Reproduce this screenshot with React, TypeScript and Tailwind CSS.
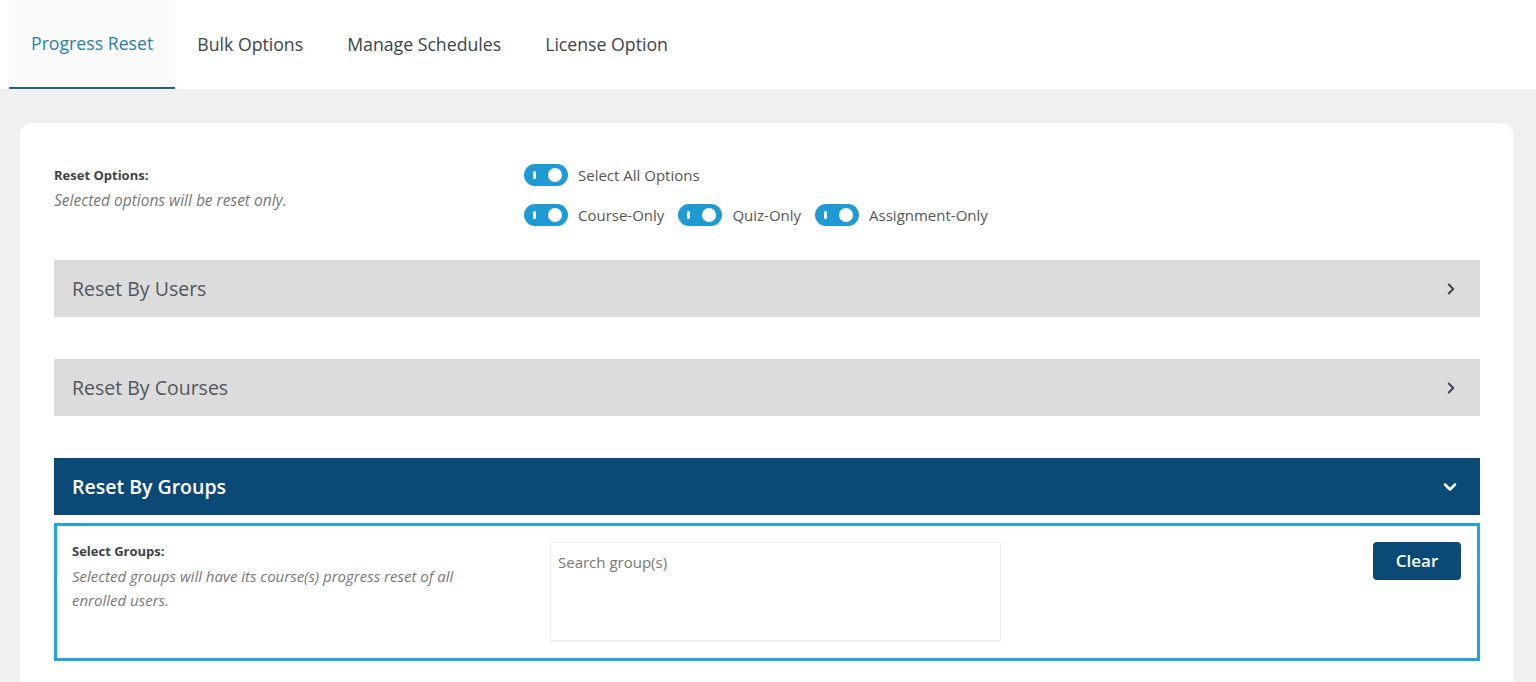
import { ChevronRight, ChevronDown } from "lucide-react";

const tabs = ["Progress Reset", "Bulk Options", "Manage Schedules", "License Option"];

function Toggle() {
  return (
    <span className="relative inline-flex h-[22px] w-[44px] items-center rounded-full bg-[#1f9ad3]">
      <span className="absolute left-[9px] top-[7px] h-[8px] w-[3px] rounded-sm bg-white" />
      <span className="absolute right-[6px] top-[4px] h-[14px] w-[14px] rounded-full bg-white" />
    </span>
  );
}

function Option({ label }: { label: string }) {
  return (
    <label className="flex items-center gap-[10px] text-[15px] text-[#555]">
      <Toggle />
      <span>{label}</span>
    </label>
  );
}

function Panel({ title, open }: { title: string; open?: boolean }) {
  return (
    <div
      className={
        open
          ? "flex h-[57px] items-center justify-between bg-[#0b4a77] pl-[18px] pr-[20px] text-white"
          : "flex h-[57px] items-center justify-between bg-[#dcdcdc] pl-[18px] pr-[20px] text-[#50575e]"
      }
    >
      <h3 className={open ? "text-[19.5px] font-semibold" : "text-[19.5px]"}>{title}</h3>
      {open ? (
        <ChevronDown size={20} strokeWidth={3} />
      ) : (
        <ChevronRight size={18} strokeWidth={2.5} className="text-[#3c434a]" />
      )}
    </div>
  );
}

export default function App() {
  return (
    <div className="min-h-screen bg-[#f0f0f1] font-['Open_Sans',sans-serif]">
      {/* tabs */}
      <nav className="flex h-[89px] items-stretch bg-white pl-[9px]">
        {tabs.map((t, i) => (
          <div
            key={t}
            className={
              i === 0
                ? "flex items-center border-b-2 border-[#1c6479] bg-[#fafafa] px-[22px] text-[17.7px] text-[#2980ad]"
                : "flex items-center px-[22px] text-[17.7px] text-[#3c434a]"
            }
          >
            {t}
          </div>
        ))}
      </nav>

      <div className="pl-[20px] pr-[23px] pt-[34px]">
        <div className="rounded-t-[12px] bg-white pl-[34px] pr-[33px] pt-[41px] pb-[24px]">
          {/* reset options */}
          <div className="flex">
            <div className="w-[470px] pt-[2px]">
              <p className="text-[13px] font-bold text-[#3c434a]">Reset Options:</p>
              <p className="mt-[3px] text-[15.5px] italic text-[#777]">
                Selected options will be reset only.
              </p>
            </div>
            <div className="flex flex-col gap-[17px]">
              <Option label="Select All Options" />
              <div className="flex gap-[14px]">
                <Option label="Course-Only" />
                <Option label="Quiz-Only" />
                <Option label="Assignment-Only" />
              </div>
            </div>
          </div>

          <div className="mt-[34px] flex flex-col gap-[42px]">
            <Panel title="Reset By Users" />
            <Panel title="Reset By Courses" />
            <div>
              <Panel title="Reset By Groups" open />
              <div className="mt-[8px] flex h-[138px] border-[3px] border-[#22a3df] pt-[16px] pl-[15px] pr-[16px]">
                <div className="w-[478px]">
                  <p className="text-[13px] font-bold text-[#3c434a]">Select Groups:</p>
                  <p className="mt-[2px] pr-[40px] text-[15px] leading-[24px] italic text-[#777]">
                    Selected groups will have its course(s) progress reset of all enrolled users.
                  </p>
                </div>
                <div className="h-[99px] w-[451px] rounded-[2px] border border-[#f0f0f0] px-[7px] pt-[8px] text-[15px] text-[#777] shadow-[0_1px_2px_rgba(0,0,0,0.06)]">
                  Search group(s)
                </div>
                <div className="flex flex-1 justify-end">
                  <button className="h-[38px] w-[88px] rounded-[4px] bg-[#0b4a77] text-[17px] font-semibold text-white">
                    Clear
                  </button>
                </div>
              </div>
            </div>
          </div>
        </div>
      </div>
    </div>
  );
}
